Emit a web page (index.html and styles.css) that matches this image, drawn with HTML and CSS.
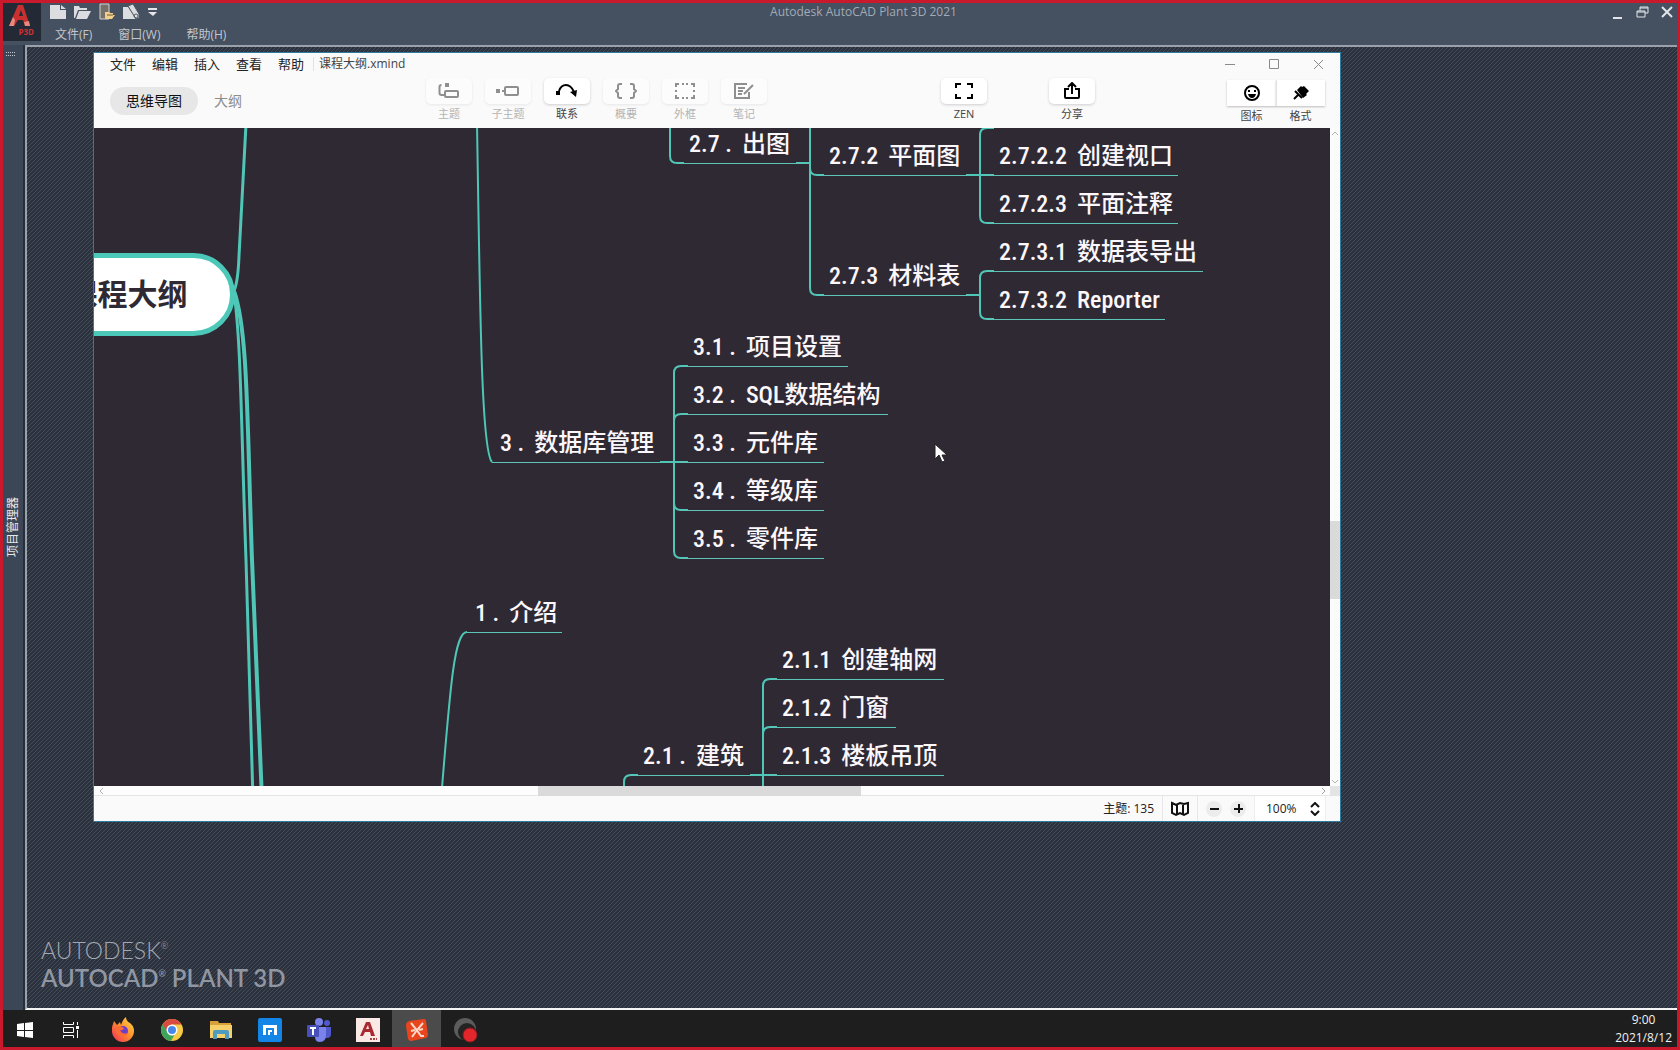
FILE: index.html
```html
<!DOCTYPE html>
<html lang="zh-CN">
<head>
<meta charset="utf-8">
<title>Autodesk AutoCAD Plant 3D 2021</title>
<link rel="stylesheet" href="styles.css">
</head>
<body>
<div class="screen">
  <header class="appbar">
    <button class="applogo" aria-label="P3D">
      <svg width="38" height="38" viewBox="0 0 38 38"><path d="M6 23 15 2h5l7 21h-5l-2-6h-5l-4 6z" fill="#c9302f"/><path d="M16 13l2-6 2 6z" fill="#232a35"/><path d="M6 23l4-9 2 3-1 6zM21 19l5-1 1 5h-5z" fill="#e58a80"/></svg>
      <span class="applogo-tag">P3D</span>
    </button>
    <div class="appbar-main">
      <div class="quick">
        <button aria-label="新建"><svg width="16" height="14" viewBox="0 0 16 14"><path d="M0 0h10v5h6v9H0z" fill="#dcdde0"/><path d="M11 0l5 4h-5z" fill="#dcdde0"/></svg></button>
        <button aria-label="打开"><svg width="17" height="14" viewBox="0 0 17 14"><path d="M0 13V1h5l1 2h7v2H4L1 13zM5 6h12l-4 8H2z" fill="#dcdde0"/></svg></button>
        <button aria-label="打开项目"><svg width="16" height="17" viewBox="0 0 16 17"><path d="M1 1h9v15H1z" fill="#75706a" stroke="#d5d3cf"/><path d="M6 16V9h4l1 1h3v2h2l-3 4z" fill="#f3cf8a"/><path d="M8 12h6" stroke="#6b5a3a"/></svg></button>
        <button aria-label="图纸"><svg width="17" height="16" viewBox="0 0 17 16"><path d="M0 3h5l8 12H0z" fill="#dcdde0"/><path d="M5 2l5-2 6 10v4l-3 1z" fill="#dcdde0" stroke="#525a66"/><circle cx="13" cy="12" r="2" fill="none" stroke="#525a66"/></svg></button>
        <button aria-label="自定义"><svg width="9" height="8" viewBox="0 0 9 8"><path d="M0 0h9v2H0zM0 4h9L5 8z" fill="#e4e6e9"/></svg></button>
      </div>
      <nav class="appmenu">
        <button>文件(F)</button><button>窗口(W)</button><button>帮助(H)</button>
      </nav>
    </div>
    <h1 class="apptitle">Autodesk AutoCAD Plant 3D 2021</h1>
    <div class="appctl">
      <button aria-label="最小化"><svg width="13" height="13" viewBox="0 0 13 13"><path d="M2 11h9v2H2z" fill="#e1e5ea"/></svg></button>
      <button aria-label="还原"><svg width="13" height="12" viewBox="0 0 13 12"><path d="M1 5h8v6H1zM4 5V1h8v6H9M4 2h8M1 6h8" fill="none" stroke="#e1e5ea"/></svg></button>
      <button aria-label="关闭"><svg width="12" height="12" viewBox="0 0 12 12"><path d="M1 1l10 10M11 1L1 11" stroke="#e1e5ea" stroke-width="2"/></svg></button>
    </div>
  </header>

  <aside class="side">
    <svg class="grip" width="10" height="4" viewBox="0 0 10 4"><path d="M0 0.500h10M0 3.500h10" stroke="#c3c9d0" stroke-dasharray="1 1"/></svg>
    <button class="side-title">项目管理器</button>
  </aside>

  <main class="desk">
    <div class="brand">
      <p class="brand-a">AUTODESK<sup>®</sup></p>
      <p class="brand-b">AUTOCAD<sup>®</sup> PLANT 3D</p>
    </div>

    <section class="win">
      <div class="menubar">
        <nav class="menus"><button>文件</button><button>编辑</button><button>插入</button><button>查看</button><button>帮助</button></nav>
        <h2 class="doc">课程大纲.xmind</h2>
        <div class="winctl">
          <button aria-label="最小化"><svg width="11" height="11" viewBox="0 0 11 11"><path d="M0 5.500h10" stroke="#8a8a8a"/></svg></button>
          <button aria-label="最大化"><svg width="11" height="11" viewBox="0 0 11 11"><path d="M.5.5h9v9h-9z" fill="none" stroke="#8a8a8a"/></svg></button>
          <button aria-label="关闭"><svg width="11" height="11" viewBox="0 0 11 11"><path d="M1 1l9 9M10 1l-9 9" stroke="#8a8a8a"/></svg></button>
        </div>
      </div>

      <div class="toolbar">
        <div class="tabs"><button class="tab on">思维导图</button><button class="tab">大纲</button></div>
        <div class="tools">
          <button class="tool off"><span class="face"><svg width="22" height="16" viewBox="0 0 22 16"><path d="M6 12H3.500Q1.500 12 1.500 10V4Q1.500 2 3.500 2" fill="none" stroke="#8f8f8f" stroke-width="2"/><path d="M7 0h4v4H7z" fill="#8f8f8f"/><rect x="7" y="8" width="13" height="6" rx="1" fill="none" stroke="#8f8f8f" stroke-width="2"/></svg></span>主题</button>
          <button class="tool off"><span class="face"><svg width="24" height="16" viewBox="0 0 24 16"><path d="M0 6h4v4H0zM6 7h3v2H6z" fill="#8f8f8f"/><rect x="9" y="4" width="13" height="8" rx="1" fill="none" stroke="#8f8f8f" stroke-width="2"/></svg></span>子主题</button>
          <button class="tool"><span class="face"><svg width="22" height="16" viewBox="0 0 22 16"><path d="M3 8Q5 2 10 2T18 9" fill="none" stroke="#000" stroke-width="2"/><path d="M0 8h4v4H0zM14 9l7-2-1 7z" fill="#000"/></svg></span>联系</button>
          <button class="tool off"><span class="face"><svg width="22" height="16" viewBox="0 0 22 16"><path d="M7 1H5Q3 1 3 3v3L1 8l2 2v3q0 2 2 2h2M15 1h2q2 0 2 2v3l2 2-2 2v3q0 2-2 2h-2" fill="none" stroke="#8f8f8f" stroke-width="2"/></svg></span>概要</button>
          <button class="tool off"><span class="face"><svg width="20" height="16" viewBox="0 0 20 16"><path d="M1 4V1h3M7 1h2M11 1h2M16 1h3v3M19 7v2M19 12v3h-3M13 15h-2M9 15H7M4 15H1v-3M1 9V7" fill="none" stroke="#8f8f8f" stroke-width="2"/></svg></span>外框</button>
          <button class="tool off"><span class="face"><svg width="20" height="16" viewBox="0 0 20 16"><path d="M13 1H1v14h14V9M4 5h7M4 8h5M4 11h4M10 11l9-9" fill="none" stroke="#8f8f8f" stroke-width="2"/></svg></span>笔记</button>
        </div>
        <button class="tool zen"><span class="face"><svg width="18" height="16" viewBox="0 0 18 16"><path d="M1 5V1h5M12 1h5v4M17 11v4h-5M6 15H1v-4" fill="none" stroke="#000" stroke-width="2"/></svg></span>ZEN</button>
        <button class="tool share"><span class="face"><svg width="16" height="18" viewBox="0 0 16 18"><path d="M5 7H1v8q0 1 1 1h12q1 0 1-1V7h-4M8 12V2M4 5l4-4 4 4" fill="none" stroke="#000" stroke-width="2"/></svg></span>分享</button>
        <div class="panels">
          <button class="panel"><span class="pface"><svg width="16" height="16" viewBox="0 0 16 16"><circle cx="8" cy="8" r="7" fill="none" stroke="#000" stroke-width="2"/><path d="M4 5h2v2H4zM10 5h2v2h-2zM4 9h8q-1 4-4 4T4 9z" fill="#000"/></svg></span>图标</button>
          <button class="panel"><span class="pface"><svg width="16" height="16" viewBox="0 0 16 16"><path d="M4 5l4-4 1 1 2-1 5 5-3 3 1 1-4 3z" fill="#000"/><path d="M2 6l7 7M6 9l-5 5" stroke="#000" stroke-width="2"/></svg></span>格式</button>
        </div>
      </div>

      <div class="view">
        <div class="map">
          <div class="sheet">
            <svg class="links" width="1400" height="900" viewBox="0 0 1400 900">
              <g class="trunk">
                <path d="M234 291Q238 282 239 256L246 124"/>
                <path d="M234 293C241 340 241 420 246 560L253 800"/>
                <path class="wide" d="M234 291C248 330 247 420 252 560L262 800"/>
              </g>
              <g class="branch">
                <path d="M477 124C480 300 481 450 492 462"/>
                <path d="M441 800C450 690 454 632 467 632"/>
              </g>
              <g class="fork">
                <path d="M670 120V156Q670 163 677 163H684M796 163H809"/>
                <path d="M810 120V288Q810 295 817 295H824M810 168Q810 175 817 175H824"/>
                <path d="M966 175H994M994 128H987Q980 128 980 135V216Q980 223 987 223H994"/>
                <path d="M966 295H980M994 271H987Q980 271 980 278V312Q980 319 987 319H994"/>
                <path d="M660 462H688M688 366H681Q674 366 674 373V551Q674 558 681 558H688M688 414H681Q674 414 674 421M688 510H681Q674 510 674 503"/>
                <path d="M750 775H777M777 679H770Q763 679 763 686V800M777 727H770Q763 727 763 734"/>
                <path d="M638 775H631Q624 775 624 782V800"/>
              </g>
            </svg>
            <div class="root">课程大纲</div>
            <div class="node" style="left:677px;top:124px;width:132px"><b>2.7 .</b>出图</div>
            <div class="node" style="left:817px;top:136px;width:150px"><b>2.7.2</b>平面图</div>
            <div class="node" style="left:987px;top:136px;width:191px"><b>2.7.2.2</b>创建视口</div>
            <div class="node" style="left:987px;top:184px;width:191px"><b>2.7.2.3</b>平面注释</div>
            <div class="node" style="left:817px;top:256px;width:150px"><b>2.7.3</b>材料表</div>
            <div class="node" style="left:987px;top:232px;width:216px"><b>2.7.3.1</b>数据表导出</div>
            <div class="node" style="left:987px;top:280px;width:178px"><b>2.7.3.2</b><i>Reporter</i></div>
            <div class="node" style="left:681px;top:327px;width:167px"><b>3.1 .</b>项目设置</div>
            <div class="node" style="left:681px;top:375px;width:207px"><b>3.2 .</b><i>SQL</i>数据结构</div>
            <div class="node" style="left:681px;top:423px;width:143px"><b>3.3 .</b>元件库</div>
            <div class="node" style="left:681px;top:471px;width:143px"><b>3.4 .</b>等级库</div>
            <div class="node" style="left:681px;top:519px;width:143px"><b>3.5 .</b>零件库</div>
            <div class="node main" style="left:492px;top:423px;width:168px"><b>3 .</b>数据库管理</div>
            <div class="node main" style="left:467px;top:593px;width:95px"><b>1 .</b>介绍</div>
            <div class="node" style="left:631px;top:736px;width:120px"><b>2.1 .</b>建筑</div>
            <div class="node" style="left:770px;top:640px;width:174px"><b>2.1.1</b>创建轴网</div>
            <div class="node" style="left:770px;top:688px;width:126px"><b>2.1.2</b>门窗</div>
            <div class="node" style="left:770px;top:736px;width:174px"><b>2.1.3</b>楼板吊顶</div>
            <svg class="cursor" width="14" height="20" viewBox="0 0 14 20"><path d="M1 1v15l4-4 3 7 3-1-3-6h5z" fill="#fff" stroke="#222" stroke-width="1"/></svg>
          </div>
        </div>
        <div class="vbar">
          <svg width="8" height="5" viewBox="0 0 8 5"><path d="M1 4l3-3 3 3" fill="none" stroke="#b5b5b5"/></svg>
          <span class="vthumb"></span>
          <svg width="8" height="5" viewBox="0 0 8 5"><path d="M1 1l3 3 3-3" fill="none" stroke="#b5b5b5"/></svg>
        </div>
        <div class="hbar">
          <svg width="5" height="8" viewBox="0 0 5 8"><path d="M4 1L1 4l3 3" fill="none" stroke="#b5b5b5"/></svg>
          <span class="hthumb"></span>
          <svg width="5" height="8" viewBox="0 0 5 8"><path d="M1 1l3 3-3 3" fill="none" stroke="#a0a0a0"/></svg>
        </div>
        <div class="corner"></div>
      </div>

      <footer class="status">
        <span class="count">主题: 135</span>
        <button class="overview" aria-label="导航图"><svg width="18" height="16" viewBox="0 0 18 16"><path d="M1 2l4 2 4-2 4 1 4-1v10l-4 2-4-2-4 2-4-2zM6 4v9M12 3v10" fill="none" stroke="#111" stroke-width="2"/></svg></button>
        <div class="zoom">
          <button aria-label="缩小"><svg width="9" height="9" viewBox="0 0 9 9"><path d="M0 4h9v2H0z" fill="#111"/></svg></button>
          <button aria-label="放大"><svg width="9" height="9" viewBox="0 0 9 9"><path d="M0 4h9v2H0zM4 0h2v9H4z" fill="#111"/></svg></button>
        </div>
        <label class="scale"><select aria-label="缩放比例"><option>100%</option></select><svg width="10" height="14" viewBox="0 0 10 14"><path d="M1 5l4-4 4 4M1 9l4 4 4-4" fill="none" stroke="#111" stroke-width="2"/></svg></label>
      </footer>
    </section>
  </main>

  <footer class="taskbar">
    <div class="sys">
      <button aria-label="开始"><svg width="16" height="16" viewBox="0 0 16 16"><path d="M0 2l7-1v7H0zM8 1l8-1v8H8zM0 9h7v6l-7-1zM8 9h8v7l-8-1z" fill="#fff"/></svg></button>
      <button aria-label="任务视图"><svg width="17" height="16" viewBox="0 0 17 16"><path d="M.5 0v2.500h10V0M.5 5.500h10v5H.5zM.5 16v-2.500h10V16M14.500 0v3M14.500 8v8" fill="none" stroke="#fff"/><path d="M13 4h3v3h-3z" fill="#fff"/></svg></button>
    </div>
    <button class="task" aria-label="Firefox"><svg width="24" height="26" viewBox="0 0 24 26"><defs><linearGradient id="fx" x1="1" y1="0" x2="0" y2="1"><stop offset="0" stop-color="#ffe14a"/><stop offset=".5" stop-color="#ff8a2a"/><stop offset="1" stop-color="#ee2a62"/></linearGradient></defs><path d="M1 10L3 4l3 4 3-3 1 3q2-6 5-8 0 4 4 6 4 3 4 8A11 11 0 0 1 1 14z" fill="url(#fx)"/><circle cx="12" cy="14" r="5" fill="#6d3fc9"/><path d="M5 10q3-2 8 1-1 3-4 2 2 5 8 3-3 5-8 3-5-3-4-9z" fill="#ff6b35"/></svg></button>
    <button class="task" aria-label="Chrome"><svg width="24" height="24" viewBox="0 0 24 24"><circle cx="12" cy="12" r="11" fill="#f7ca45"/><path d="M2.500 6.500A11 11 0 0 1 21.500 6.500H12L7 15z" fill="#d94b41"/><path d="M2.500 6.500A11 11 0 0 0 11 23l5-9-8 0z" fill="#3fa35a"/><circle cx="12" cy="12" r="5.500" fill="#fff"/><circle cx="12" cy="12" r="4" fill="#4787ea"/></svg></button>
    <button class="task" aria-label="资源管理器"><svg width="22" height="20" viewBox="0 0 22 20"><path d="M0 1h8l1 2h12v3H0z" fill="#d9a13a"/><path d="M0 5h22v13H0z" fill="#f6d06a"/><path d="M3 19v-7q0-2 2-2h12q2 0 2 2v7h-4v-5H7v5z" fill="#4e9cc0"/></svg></button>
    <button class="task" aria-label="Maxthon"><svg width="24" height="24" viewBox="0 0 24 24"><rect width="24" height="24" rx="2" fill="#1385e6"/><path d="M5 17V7h14v10h-3v-7H8v7zM10 17v-5h4v2h-2v3z" fill="#fff"/></svg></button>
    <button class="task" aria-label="Teams"><svg width="24" height="24" viewBox="0 0 24 24"><circle cx="12" cy="4" r="4" fill="#7b83eb"/><circle cx="20" cy="5" r="3" fill="#5059c9"/><path d="M16 9h8v7q0 4-4 4h-4z" fill="#5059c9"/><path d="M8 9h11v8q0 7-6 7-5 0-5-5z" fill="#7b83eb"/><rect y="7" width="12" height="12" rx="1" fill="#4650b8"/><path d="M3 10h6M6 10v7" stroke="#fff" stroke-width="2"/></svg></button>
    <button class="task" aria-label="AutoCAD"><svg width="24" height="24" viewBox="0 0 24 24"><path d="M0 0h24v24H0z" fill="#fbe9e6"/><path d="M4 18l6-14h4l5 14h-4l-1-4H9l-2 4zM10 11h3l-1-4z" fill="#a82a30" fill-rule="evenodd"/><path d="M14 21h7" stroke="#b04048" stroke-width="2" stroke-dasharray="2 1"/></svg></button>
    <button class="task current" aria-label="XMind"><svg width="24" height="24" viewBox="0 0 24 24"><path d="M4 3l15-2q2 0 2 2l2 14q0 2-2 3L6 23q-2 0-3-2L1 8q0-4 3-5z" fill="#e8451f"/><path d="M6 5l5 6 5 7 3 0M18 5l-6 7-5 7M6 13l4-1M14 12l4-1" stroke="#ffd9c9" stroke-width="2" fill="none"/></svg></button>
    <button class="task" aria-label="录屏"><svg width="26" height="26" viewBox="0 0 26 26"><circle cx="12" cy="12" r="11" fill="#5c5c5c"/><circle cx="14" cy="15" r="9" fill="#232323"/><circle cx="17" cy="18" r="7" fill="#e3262c" stroke="#8b1a1e"/></svg></button>
    <div class="clock"><time>9:00</time><time>2021/8/12</time></div>
  </footer>
</div>
</body>
</html>
```
FILE: styles.css
```css
* { box-sizing: border-box; }

body {
  margin: 0;
  font: 13px/16px "Open Sans", "Noto Sans CJK SC", sans-serif;
}

button, select {
  margin: 0;
  padding: 0;
  border: 0;
  background: none;
  color: inherit;
  font: inherit;
}

h1, h2, p { margin: 0; font-weight: 400; }
svg { display: block; flex: none; }

.screen {
  display: grid;
  grid-template: 42px minmax(0, 1fr) 37px / 22px minmax(0, 1fr);
  height: 100vh;
  border: 3px solid #c81a2c;
  background: #3b4656;
  overflow: hidden;
}

/* AutoCAD title bar */
.appbar {
  grid-column: 1 / -1;
  display: grid;
  grid-template-columns: 1fr auto 1fr;
  position: relative;
  padding-left: 47px;
  background: #455060;
  color: #c3c7cd;
}
.applogo {
  position: absolute;
  left: 0;
  top: 0;
  width: 38px;
  height: 38px;
  background: #232a35;
}
.applogo-tag {
  position: absolute;
  right: 7px;
  bottom: 5px;
  font: 700 8px/8px "Open Sans", sans-serif;
  color: #cf2f33;
}
.quick { display: flex; align-items: center; gap: 8px; height: 17px; }
.appmenu { display: flex; gap: 26px; padding: 7px 0 0 5px; font-size: 12px; }
.apptitle { font-size: 12px; line-height: 18px; color: #a4abb5; }
.appctl { display: flex; justify-content: flex-end; height: 18px; padding-right: 4px; gap: 12px; align-items: center; }

.side {
  display: flex;
  flex-direction: column;
  background: #3b4656;
  border-right: 2px solid #252e3b;
}
.grip { margin: 7px 0 0 3px; }
.side-title {
  margin: auto 0;
  padding-top: 12px;
  writing-mode: vertical-rl;
  text-orientation: sideways;
  transform: rotate(180deg);
  font-size: 12px;
  color: #e6e9ec;
}

.desk {
  position: relative;
  border: solid #9aa1aa;
  border-width: 2px 0 2px 2px;
  border-bottom-color: #f4f4f4;
  background: linear-gradient(135deg, #454d5b 12.500%, #2b313d 12.500%, #2b313d 50%, #454d5b 50%, #454d5b 62.500%, #2b313d 62.500%) 0 0 / 4px 4px;
}
.brand {
  position: absolute;
  left: 14px;
  bottom: 17px;
  font: 24px/27px Lato, "Open Sans", sans-serif;
  color: #9097a2;
}
.brand sup { font-size: 9px; line-height: 10px; vertical-align: 10px; }
.brand-a { font-size: 23px; font-weight: 300; color: #a2a8b2; }
.brand-b { font-weight: 600; }

/* XMind window */
.win {
  position: absolute;
  inset: 5px 336px 186px 66px;
  display: flex;
  flex-direction: column;
  border: 1px solid #2f7ba0;
  background: #fafafa;
  color: #222;
}
.menubar { display: flex; align-items: center; height: 22px; padding-left: 16px; }
.menus { display: flex; gap: 16px; }
.doc {
  margin-left: 9px;
  padding-left: 5px;
  border-left: 1px solid #e2e2e2;
  font-size: 12px;
  line-height: 14px;
  color: #444;
}
.winctl { display: flex; margin-left: auto; }
.winctl button { display: grid; place-items: center; width: 44px; height: 22px; }

.toolbar {
  display: flex;
  height: 53px;
  padding: 3px 15px 0 16px;
  font-size: 11px;
  line-height: 14px;
}
.tabs { display: flex; flex: 0 0 316px; padding-top: 9px; font-size: 14px; color: #8e8e8e; }
.tab { height: 28px; padding: 0 16px; border-radius: 14px; }
.tab.on { background: #e7e7e7; color: #111; }
.tools { display: flex; gap: 13px; }
.tool, .panel { display: flex; flex-direction: column; align-items: center; color: #444; }
.tool { width: 46px; gap: 3px; }
.face, .pface { display: grid; place-items: center; background: #fff; }
.face { width: 46px; height: 26px; border-radius: 5px; box-shadow: 0 1px 3px #0000002e; }
.off { color: #b4b4b4; }
.off .face { background: #fcfcfc; box-shadow: 0 1px 3px #00000014; }
.zen { margin-left: 174px; }
.share { margin-left: 62px; }
.panels { display: flex; margin: 2px 0 0 auto; }
.panel { gap: 3px; }
.pface { width: 49px; height: 26px; box-shadow: 0 1px 2px #00000040; }
.panel + .panel .pface { border-left: 1px solid #e2e2e2; }

.view {
  flex: 1;
  display: grid;
  grid-template: minmax(0, 1fr) 10px / minmax(0, 1fr) 10px;
  min-height: 0;
}
.map { position: relative; overflow: hidden; background: #2f2934; }
.sheet { position: absolute; left: -94px; top: -128px; width: 1400px; height: 900px; }
.links { position: absolute; left: 0; top: 0; fill: none; stroke: #4fc6b6; }
.trunk { stroke-width: 3px; }
.trunk .wide { stroke-width: 4px; }
.branch, .fork { stroke-width: 2px; }
.root {
  position: absolute;
  left: 20px;
  top: 253px;
  width: 215px;
  height: 83px;
  border: 5px solid #4bc8b8;
  border-radius: 42px;
  background: #fff;
  text-align: center;
  font: 700 30px/68px "Noto Sans CJK SC", sans-serif;
  color: #2f2934;
}
.node {
  position: absolute;
  height: 40px;
  padding-left: 12px;
  border-bottom: 1px solid #5cc5b7;
  font: 500 24px/35px "Noto Sans CJK SC", sans-serif;
  white-space: nowrap;
  color: #fbf7fb;
}
.node b, .node i { font: 500 24px/35px "Roboto Condensed", Roboto, sans-serif; }
.node b { margin-right: 10px; }
.node.main { padding-left: 8px; }
.cursor { position: absolute; left: 934px; top: 443px; }

.vbar { display: grid; grid-template-rows: 10px 1fr 10px; place-items: center; background: #fbfbfb; }
.vthumb { align-self: start; width: 100%; height: 78px; margin-top: 383px; background: #dadada; }
.hbar { display: grid; grid-template-columns: 14px 1fr 14px; place-items: center; background: #fdfdfd; border-bottom: 1px solid #e6e6e6; }
.hthumb { justify-self: start; width: 323px; height: 10px; margin-left: 430px; background: #dadada; }
.corner { background: #e4e4e4; }

.status { display: flex; justify-content: flex-end; height: 25px; padding-right: 14px; color: #222; font-size: 12px; }
.status > * { display: flex; align-items: center; }
.count { padding-right: 8px; }
.overview { justify-content: center; width: 36px; border: solid #e8e8e8; border-width: 0 1px; }
.zoom { gap: 8px; padding: 0 8px; }
.zoom button { display: grid; place-items: center; width: 16px; height: 16px; border-radius: 50%; background: #ececec; }
.scale { gap: 12px; padding: 0 5px 0 11px; border: solid #eee; border-width: 0 1px; background: #fff; }
.scale select { appearance: none; width: 32px; }

/* Windows taskbar */
.taskbar { grid-column: 1 / -1; display: flex; background: #1e1e1e; }
.sys { display: flex; gap: 4px; padding-right: 5px; }
.sys button { width: 43px; }
.task { width: 49px; }
.taskbar button { display: grid; place-items: center; padding-top: 2px; }
.current { background: #4b4b4b; }
.clock {
  display: flex;
  flex-direction: column;
  align-items: center;
  margin-left: auto;
  padding: 1px 5px 0 0;
  font-size: 12px;
  line-height: 18px;
  color: #f2f2f2;
}
```
